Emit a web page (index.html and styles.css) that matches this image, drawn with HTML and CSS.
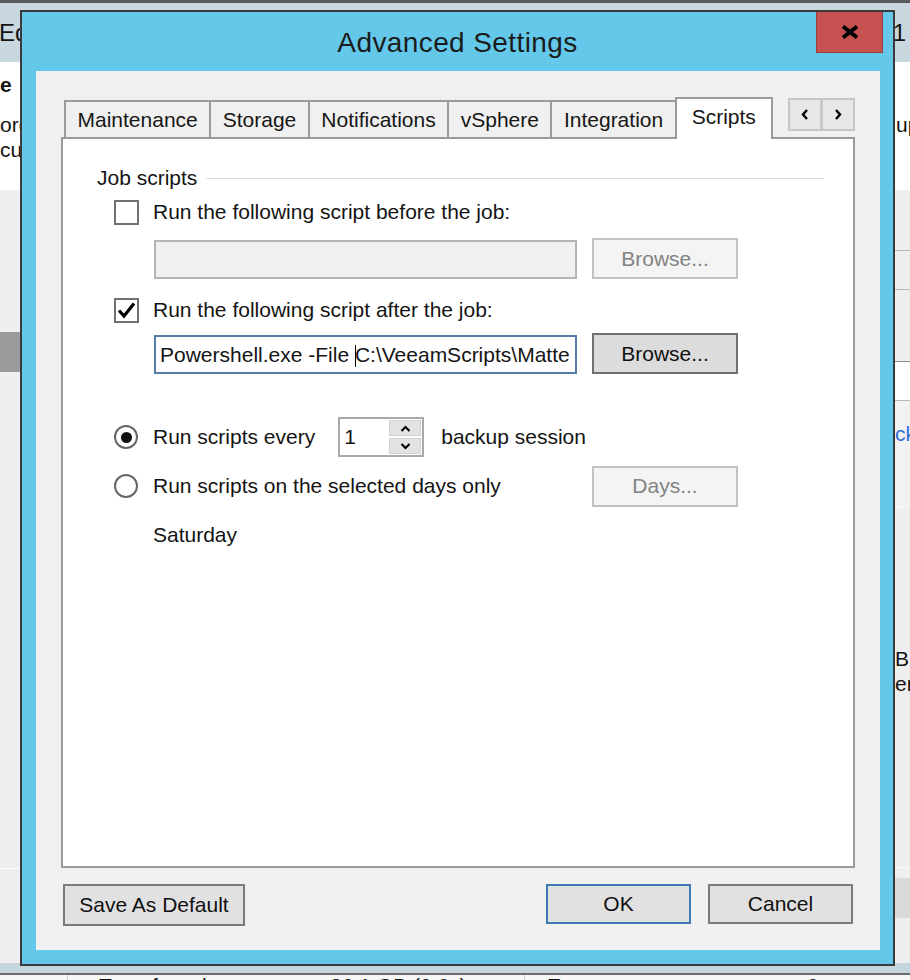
FILE: index.html
```html
<!DOCTYPE html>
<html lang="en">
<head>
<meta charset="utf-8">
<title>Advanced Settings</title>
<link rel="stylesheet" href="styles.css">
</head>
<body>
<div class="app">
  <div class="app-topline"></div>
  <div class="app-header">
    <span class="hdr-left">Ed</span>
    <span class="hdr-right">1</span>
  </div>
  <div class="app-main">
    <div class="side side-left">
      <div class="side-white">
        <div class="frag frag-bold">e</div>
        <div class="frag frag-ord">ord</div>
        <div class="frag">cus</div>
      </div>
      <div class="side-gray">
        <div class="left-bar"></div>
        <div class="left-line"></div>
      </div>
    </div>
    <div class="app-center"></div>
    <div class="side side-right">
      <div class="rs-white"><span class="frag">up</span></div>
      <div class="rs-gray h58"></div>
      <div class="rs-line"></div>
      <div class="rs-gray h38"></div>
      <div class="rs-line"></div>
      <div class="rs-gray h71"></div>
      <div class="rs-line dark"></div>
      <div class="rs-whiteband"></div>
      <div class="rs-line"></div>
      <div class="rs-link"><span class="frag link">ck</span></div>
      <div class="rs-line light"></div>
      <div class="rs-text"><div class="frag">B</div><div class="frag">er</div></div>
      <div class="rs-line light"></div>
      <div class="rs-gray h10"></div>
      <div class="rs-band"></div>
      <div class="rs-gray"></div>
    </div>
  </div>
  <div class="app-band"></div>
  <div class="app-line"></div>
  <div class="app-stats">
    <span class="st-cell st-first"></span>
    <span class="st-cell st-a">Transferred:</span>
    <span class="st-cell st-b">26.1 GB (0.6x)</span>
    <span class="st-cell st-c">Errors:</span>
    <span class="st-cell">0</span>
  </div>

  <div class="dialog">
    <div class="titlebar">
      <div class="title">Advanced Settings</div>
      <div class="close">
        <svg width="18" height="14" viewBox="0 0 18 14"><path d="M2 1.5 L16 12.5 M16 1.5 L2 12.5" stroke="#000" stroke-width="4" fill="none"/></svg>
      </div>
    </div>
    <div class="dialog-body">
      <div class="tabs">
        <div class="tab">Maintenance</div>
        <div class="tab">Storage</div>
        <div class="tab">Notifications</div>
        <div class="tab">vSphere</div>
        <div class="tab">Integration</div>
        <div class="tab active">Scripts</div>
        <div class="tab-arrows">
          <div class="tab-arrow"><svg width="8" height="11" viewBox="0 0 8 11"><path d="M6 1 L2 5.5 L6 10" stroke="#000" stroke-width="2.4" fill="none"/></svg></div>
          <div class="tab-arrow"><svg width="8" height="11" viewBox="0 0 8 11"><path d="M2 1 L6 5.5 L2 10" stroke="#000" stroke-width="2.4" fill="none"/></svg></div>
        </div>
      </div>
      <div class="panel">
        <div class="group-head"><span>Job scripts</span><span class="group-line"></span></div>

        <div class="check-row first">
          <span class="checkbox"></span>
          <span>Run the following script before the job:</span>
        </div>
        <div class="input-row first">
          <div class="textbox disabled"></div>
          <div class="btn disabled">Browse...</div>
        </div>

        <div class="check-row second">
          <span class="checkbox"><svg width="21" height="21" viewBox="0 0 21 21"><path d="M3 10.5 L8 16 L18 3.5" stroke="#000" stroke-width="3.2" fill="none"/></svg></span>
          <span>Run the following script after the job:</span>
        </div>
        <div class="input-row second">
          <div class="textbox active">Powershell.exe -File <span class="caret"></span>C:\VeeamScripts\Matte</div>
          <div class="btn">Browse...</div>
        </div>

        <div class="radio-row first">
          <span class="radio on"></span>
          <span class="radio-label">Run scripts every</span>
          <div class="spinner">
            <div class="spin-input">1</div>
            <div class="spin-btns">
              <div class="spin-btn"><svg width="11" height="7" viewBox="0 0 11 7"><path d="M1.5 6 L5.5 2 L9.5 6" stroke="#000" stroke-width="2" fill="none"/></svg></div>
              <div class="spin-btn"><svg width="11" height="7" viewBox="0 0 11 7"><path d="M1.5 1 L5.5 5 L9.5 1" stroke="#000" stroke-width="2" fill="none"/></svg></div>
            </div>
          </div>
          <span class="after-spin">backup session</span>
        </div>
        <div class="radio-row second">
          <span class="radio"></span>
          <span class="radio-label">Run scripts on the selected days only</span>
          <div class="btn disabled push">Days...</div>
        </div>
        <div class="days-text">Saturday</div>
      </div>
      <div class="footer">
        <div class="fbtn save">Save As Default</div>
        <div class="fbtn ok">OK</div>
        <div class="fbtn cancel">Cancel</div>
      </div>
    </div>
  </div>
</div>
</body>
</html>
```

FILE: styles.css
```css
* { box-sizing: border-box; }
html, body { margin: 0; padding: 0; }
body {
  width: 910px;
  height: 980px;
  overflow: hidden;
  font-family: "Liberation Sans", Arial, sans-serif;
  font-size: 21px;
  color: #141414;
  background: #efefef;
}

/* ---------- background application ---------- */
.app {
  position: relative;
  width: 910px;
  height: 980px;
  overflow: hidden;
  background: #efefef;
  display: flex;
  flex-direction: column;
}
.app-topline { flex: none; height: 3px; background: #5a5a5a; }
.app-header {
  flex: none;
  height: 59px;
  background: #c8d8de;
  display: flex;
  justify-content: space-between;
  align-items: center;
  font-size: 24px;
  padding-right: 4px;
  white-space: nowrap;
}
.hdr-left { margin-left: -1px; }
.app-main { flex: none; height: 901px; display: flex; }
.side { display: flex; flex-direction: column; overflow: hidden; white-space: nowrap; }
.side-left { width: 20px; }
.app-center { flex: 1; }
.side-right { width: 15px; }
.frag { line-height: 25px; }
.frag-bold { font-weight: bold; }
.side-white { height: 128px; background: #fff; padding-top: 10px; flex: none; }
.frag-ord { margin-top: 15px; }
.side-gray { flex: 1; display: flex; flex-direction: column; background: #efefef; }
.left-bar { height: 40px; margin-top: 142px; background: #9b9b9b; }
.left-line { height: 1px; margin-top: 496px; background: #ffffff; }

.rs-white { height: 128px; background: #fff; padding: 50px 0 0 1px; flex: none; }
.rs-gray { flex: none; background: #efefef; }
.rs-gray.h58 { height: 60px; }
.rs-gray.h38 { height: 38px; }
.rs-gray.h71 { height: 71px; }
.rs-gray.h10 { height: 10px; }
.rs-gray:last-child { flex: 1; }
.rs-line { flex: none; height: 1px; background: #b8b8b8; }
.rs-line.dark { background: #8e8e8e; }
.rs-line.light { background: #fafafa; }
.rs-whiteband { flex: none; height: 38px; background: #fff; }
.rs-link { flex: none; height: 106px; background: #f2f2f2; padding-top: 20px; }
.link { color: #2f6fd8; }
.rs-text { flex: none; height: 359px; background: #efefef; padding-top: 138px; line-height: 27px; }
.rs-band { flex: none; height: 40px; background: #dadada; }

.app-band { flex: none; height: 10px; background: #c5d5dc; }
.app-line { flex: none; height: 2px; background: #6b6b6b; }
.app-stats {
  flex: none;
  height: 5px;
  overflow: hidden;
  display: flex;
  background: #f7f7f7;
  line-height: 21px;
  white-space: nowrap;
}
.st-cell { display: block; }
.st-first { width: 68px; border-right: 1px solid #d0d0d0; }
.st-a { width: 262px; padding-left: 31px; }
.st-b { width: 195px; border-right: 1px solid #d0d0d0; }
.st-c { width: 282px; padding-left: 22px; }

/* ---------- dialog ---------- */
.dialog {
  position: absolute;
  left: 20px;
  top: 10px;
  width: 875px;
  height: 956px;
  border: 2px solid #3a3a3a;
  background: #63c8e9;
  display: flex;
  flex-direction: column;
  z-index: 5;
}
.titlebar {
  flex: none;
  height: 59px;
  display: grid;
  grid-template-columns: 1fr auto 1fr;
  align-items: start;
}
.title {
  grid-column: 2;
  align-self: center;
  font-size: 28px;
  letter-spacing: 0.4px;
  color: #1c1c1c;
  padding-top: 2px;
}
.close {
  grid-column: 3;
  justify-self: end;
  margin-right: 10px;
  width: 67px;
  height: 41px;
  background: #c75050;
  border: 1px solid #9a3f3a;
  border-top: none;
  display: flex;
  align-items: center;
  justify-content: center;
}

.dialog-body {
  flex: 1;
  margin: 0 13px 14px 14px;
  background: #f0f0f0;
  padding: 26px 25px 24px 25px;
  display: flex;
  flex-direction: column;
}

.tabs {
  flex: none;
  height: 40px;
  display: flex;
  align-items: flex-end;
  padding-left: 3px;
  position: relative;
  z-index: 2;
}
.tab {
  height: 37px;
  border: 2px solid #9b9b9b;
  border-bottom: none;
  background: #f0f0f0;
  padding: 0 11.5px;
  margin-left: -2px;
  display: flex;
  align-items: center;
  white-space: nowrap;
  color: #161616;
}
.tab:first-child { margin-left: 0; }
.tab.active {
  height: 42px;
  margin-bottom: -2px;
  background: #fff;
  padding: 0 15px 5px 15px;
  position: relative;
  z-index: 3;
}
.tab-arrows {
  margin-left: auto;
  align-self: flex-start;
  margin-top: 1px;
  display: flex;
}
.tab-arrow {
  width: 34px;
  height: 33px;
  border: 2px solid #c7c7c7;
  background: #e7e7e7;
  display: flex;
  align-items: center;
  justify-content: center;
}
.tab-arrow + .tab-arrow { margin-left: -1px; }

.panel {
  flex: 1;
  border: 2px solid #9b9b9b;
  background: #fff;
  padding: 28px 29px 0 34px;
  display: flex;
  flex-direction: column;
  align-items: flex-start;
}
.group-head {
  align-self: stretch;
  display: flex;
  align-items: center;
  gap: 9px;
  height: 22px;
  line-height: 22px;
}
.group-line { flex: 1; height: 1px; background: #d5dee4; }

.check-row {
  display: flex;
  align-items: center;
  gap: 14px;
  height: 26px;
  margin-left: 17px;
  white-space: nowrap;
}
.check-row.first { margin-top: 10px; }
.check-row.second { margin-top: 18px; }
.checkbox {
  flex: none;
  width: 25px;
  height: 25px;
  border: 2px solid #707070;
  background: #fff;
  display: flex;
  align-items: center;
  justify-content: center;
}

.input-row {
  display: flex;
  align-items: flex-end;
  gap: 15px;
  margin-left: 57px;
}
.input-row.first { margin-top: 13px; }
.input-row.second { margin-top: 10px; }
.textbox {
  width: 423px;
  height: 39px;
  border: 2px solid #b4b4b4;
  background: #f0f0f0;
  overflow: hidden;
  white-space: nowrap;
  padding-left: 4px;
  line-height: 35px;
}
.textbox.active { border-color: #567ca6; background: #fff; }
.caret {
  display: inline-block;
  width: 0;
  height: 22px;
  border-left: 1px solid #000;
  vertical-align: middle;
  margin-right: -1px;
}
.btn {
  width: 146px;
  height: 41px;
  border: 2px solid #707070;
  background: #dcdcdc;
  color: #111;
  display: flex;
  align-items: center;
  justify-content: center;
}
.btn.disabled { border-color: #c2c2c2; background: #f4f4f4; color: #838383; }

.radio-row {
  display: flex;
  align-items: center;
  margin-left: 17px;
  white-space: nowrap;
}
.radio-row.first { margin-top: 43px; height: 40px; }
.radio-row.second { margin-top: 8px; height: 42px; width: 624px; }
.radio {
  flex: none;
  width: 24px;
  height: 24px;
  border-radius: 50%;
  border: 2px solid #666;
  background: #fff;
  display: flex;
  align-items: center;
  justify-content: center;
}
.radio.on::after {
  content: "";
  width: 11px;
  height: 11px;
  border-radius: 50%;
  background: #111;
}
.radio-label { margin-left: 15px; }
.push { margin-left: auto; }
.spinner {
  display: flex;
  width: 86px;
  height: 40px;
  border: 2px solid #a9a9a9;
  margin-left: 23px;
  background: #fff;
}
.spin-input { flex: 1; padding-left: 4px; line-height: 36px; }
.spin-btns {
  width: 34px;
  display: flex;
  flex-direction: column;
  gap: 2px;
  padding: 1px 1px 1px 1px;
  background: #fff;
}
.spin-btn {
  flex: 1;
  background: #e3e3e3;
  border: 1px solid #d2d2d2;
  display: flex;
  align-items: center;
  justify-content: center;
}
.after-spin { margin-left: 17px; }
.days-text { margin: 15px 0 0 56px; line-height: 26px; }

.footer {
  flex: none;
  display: flex;
  align-items: flex-start;
  margin-top: 16px;
  padding: 0 2px;
}
.fbtn {
  height: 40px;
  border: 2px solid #7a7a7a;
  background: #e1e1e1;
  display: flex;
  align-items: center;
  justify-content: center;
  color: #111;
  white-space: nowrap;
}
.fbtn.save { width: 182px; height: 42px; }
.fbtn.ok { width: 145px; margin-left: auto; border-color: #3d7ab3; }
.fbtn.cancel { width: 145px; margin-left: 17px; }
```
